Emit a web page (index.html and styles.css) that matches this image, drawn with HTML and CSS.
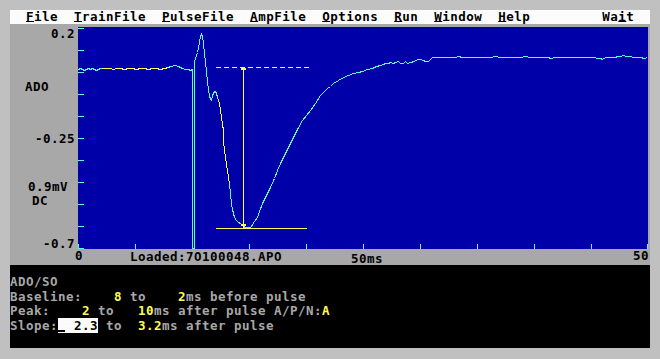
FILE: index.html
```html
<!DOCTYPE html>
<html>
<head>
<meta charset="utf-8">
<link rel="stylesheet" href="styles.css">
</head>
<body>
<div class="screen">
<div class="menubar">  <u>F</u>ile  <u>T</u>rainFile  <u>P</u>ulseFile  <u>A</u>mpFile  <u>O</u>ptions  <u>R</u>un  <u>W</u>indow  <u>H</u>elp         Wa<u>i</u>t</div>
<div class="chart">
<div class="chart-main">
<div class="yaxis">
<div class="ylab right l-top">0.2</div>
<div class="ylab l-ado">ADO</div>
<div class="ylab right l-mid">-0.25</div>
<div class="ylab l-mv">0.9mV</div>
<div class="ylab l-dc">DC</div>
<div class="ylab right l-bot">-0.7</div>
</div>
<div class="plot">
<svg viewBox="78 27 570 222" shape-rendering="crispEdges">
<rect x="78" y="27" width="570" height="222" fill="#0000a8"/>
<g fill="#54fcfc">
<rect x="78" y="28" width="6" height="1"/>
<rect x="78" y="50" width="6" height="1"/>
<rect x="78" y="72" width="6" height="1"/>
<rect x="78" y="94" width="6" height="1"/>
<rect x="78" y="116" width="6" height="1"/>
<rect x="78" y="138" width="6" height="1"/>
<rect x="78" y="160" width="6" height="1"/>
<rect x="78" y="182" width="6" height="1"/>
<rect x="78" y="204" width="6" height="1"/>
<rect x="78" y="226" width="6" height="1"/>
<rect x="78" y="248" width="6" height="1"/>
<rect x="78" y="244" width="1" height="5"/>
<rect x="135" y="244" width="1" height="5"/>
<rect x="192" y="244" width="1" height="5"/>
<rect x="249" y="244" width="1" height="5"/>
<rect x="306" y="244" width="1" height="5"/>
<rect x="363" y="244" width="1" height="5"/>
<rect x="420" y="244" width="1" height="5"/>
<rect x="477" y="244" width="1" height="5"/>
<rect x="534" y="244" width="1" height="5"/>
<rect x="591" y="244" width="1" height="5"/>
<rect x="647" y="244" width="1" height="5"/>
</g>
<g transform="translate(0.5 0.5)" fill="none" stroke-width="1">
<polyline stroke="#54fcfc" points="78,69 80,68 82,69 84,70 86,69 88,68 90,69 92,68 94,69 96,70 98,69 100,68 102,68 106,68 110,68 113,69 116,68 120,68 124,69 128,68 132,68 136,69 140,68 144,68 148,69 152,68 156,68 160,69 164,68 168,67 170,66 175,65 178,66 180,67 182,68 185,69 188,69 190,70 192,69 192,248 194,248 194,60 195,59 196,55 197,52 198,48 199,42 200,36 201,34 202,36 203,43 204,53 205,62 206,70 207,82 208,89 209,95 210,99 211,100 212,96 213,92 215,91 216,93 217,97 218,100 219,103 220,110 221,117 222,124 223,130 223,140 224,150 225,157 226,164 227,170 228,177 229,183 230,193 231,203 232,209 233,213 234,217 236,220 238,222 240,223 242,225 243,226 245,227 248,227 250,227 251,226 252,224 254,221 257,217 259,211 262,203 266,195 270,187 274,178 277,170 281,161 285,153 289,145 293,137 297,129 302,120 306,115 310,110 315,103 320,95 324,91 327,88 330,86 333,83 338,80 343,77 348,75 353,73 358,72 362,71 367,69 372,68 376,66 380,65 383,64 385,63 388,63 390,62 393,63 395,62 398,61 400,63 403,63 405,61 407,63 410,62 414,61 417,59 420,59 423,60 425,61 428,61 430,59 432,57 440,57 445,57 455,57 458,56 462,57 470,57 480,57 490,57 495,56 500,57 510,57 520,57 525,56 530,57 540,57 548,57 550,58 556,57 560,57 570,57 580,57 590,57 600,58 602,59 605,57 612,57 620,56 623,55 626,56 630,56 633,57 640,57 644,58 647,57"/>
<polyline stroke="#fcfc54" points="101,68 106,68 110,68 113,69 116,68 120,68 124,69 128,68 132,68 136,69 140,68 144,68 148,69 152,68 156,68 160,69 164,68 168,67 169,67"/>
<polyline stroke="#fcfc54" points="218,100 219,103 220,110 221,117 222,124 223,130 223,140 224,150 225,157 226,164 227,170 228,177 229,183"/>
<line stroke="#fcfc54" x1="215" y1="67" x2="308" y2="67" stroke-dasharray="5 3"/>
<line stroke="#fcfc54" x1="215" y1="228" x2="306" y2="228"/>
<line stroke="#fcfc54" x1="243" y1="67" x2="243" y2="227"/>
</g>
<g fill="#fcfc54">
<rect x="241" y="68" width="5" height="2"/>
<rect x="241" y="224" width="5" height="2"/>
</g>
</svg>
</div>
</div>
<div class="xaxis"><span class="x0">0</span><span class="xfile">Loaded:7O100048.APO</span><span class="xmid">50ms</span><span class="xend">50</span></div>
</div>
<div class="panel">
<div class="line">ADO/SO</div>
<div class="line">Baseline:    <span class="val">8</span> to    <span class="val">2</span>ms before pulse</div>
<div class="line">Peak:    <span class="val">2</span> to   <span class="val">10</span>ms after pulse A/P/N:<span class="val">A</span></div>
<div class="line">Slope:<span class="field"><span class="cursor"></span> 2.3</span> to  <span class="val">3.2</span>ms after pulse</div>
</div>
</div>
</body>
</html>
```

FILE: styles.css
```css
html, body {
  margin: 0;
  padding: 0;
  background: #c0c0c0;
}

.screen {
  margin: 10px;
  width: 640px;
  font-family: "DejaVu Sans Mono", "Liberation Mono", monospace;
  font-weight: bold;
  font-size: 12.5px;
  letter-spacing: 0.475px;
}

.menubar,
.ylab,
.xaxis span,
.panel .line {
  white-space: pre;
}

.menubar {
  height: 14px;
  line-height: 14px;
  background: #fcfcfc;
  color: #000;
}

.menubar u {
  text-decoration: underline;
  text-decoration-thickness: 1px;
  text-underline-offset: 0px;
}

.chart {
  height: 241px;
  background: #a8a8a8;
  color: #000;
  display: flex;
  flex-direction: column;
}

.chart-main {
  display: flex;
  height: 225px;
}

.yaxis {
  width: 68px;
  flex: none;
  display: flex;
  flex-direction: column;
  line-height: 14px;
}

.ylab {
  height: 14px;
}

.ylab.right {
  text-align: right;
  padding-right: 3px;
}

.l-top { margin-top: 3px; }
.l-ado { margin-top: 39px; padding-left: 15px; }
.l-mid { margin-top: 38px; }
.l-mv { margin-top: 34px; padding-left: 18px; }
.l-dc { padding-left: 22px; }
.l-bot { margin-top: 29px; }

.plot {
  padding-top: 3px;
}

.plot svg {
  display: block;
  width: 570px;
  height: 222px;
}

.xaxis {
  display: flex;
  align-items: flex-start;
  height: 16px;
  line-height: 14px;
  padding-left: 65px;
  padding-right: 1px;
}

.xfile {
  margin-left: 47px;
  margin-top: 1px;
}

.xmid {
  margin-left: 69px;
  margin-top: 3px;
}

.xend {
  margin-left: auto;
}

.panel {
  height: 83px;
  box-sizing: border-box;
  padding-top: 10px;
  background: #000;
  color: #a8a8a8;
  line-height: 14.67px;
}

.val {
  color: #fcfc54;
}

.field {
  background: #fcfcfc;
  color: #000;
}

.cursor {
  display: inline-block;
  width: 7px;
  height: 2px;
  margin-right: 1px;
  background: #000;
  vertical-align: -2px;
}
```
